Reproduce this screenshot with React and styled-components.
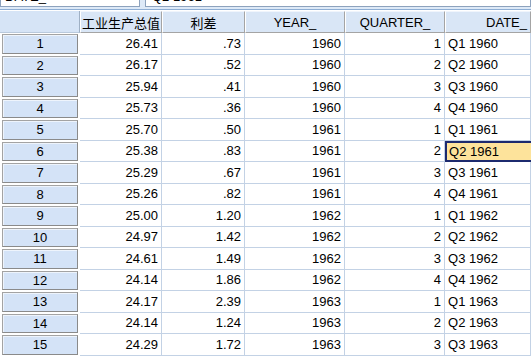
import React from "react";
import styled, { createGlobalStyle } from "styled-components";

const GlobalStyle = createGlobalStyle`
	html, body {
		margin: 0;
		padding: 0;
		background: #ffffff;
		overflow: hidden;
	}
	body {
		font-family: "Liberation Sans", Arial, "Noto Sans CJK SC", sans-serif;
		color: #000;
	}
`

const COLS = "80px 82px 83px 100px 100px 86px"

const Page = styled.div`
	width: 531px;
	height: 356px;
	overflow: hidden;
	background: #fff;
`

// 上方变量名框 / 值框 (只露出底部)
const CellBar = styled.div`
	display: flex;
	gap: 5px;
	height: 6px;
	background: #dde9f7;
	padding-bottom: 3px;
	border-bottom: 1px solid #8eaed4;
	margin-bottom: 1px;
`
const BarBox = styled.div`
	width: ${(p) => p.$width};
	flex: ${(p) => (p.$grow ? 1 : "none")};
	height: 6px;
	background: #fff;
	border: 1px solid #8da2bd;
	border-top: none;
	overflow: hidden;
`
const BarText = styled.span`
	display: block;
	font-size: 13px;
	line-height: 13px;
	margin-top: -10px;
	padding-left: ${(p) => p.$pad || "4px"};
`

const Row = styled.div`
	display: grid;
	grid-template-columns: ${COLS};
	height: ${(p) => p.$h || "21.5px"};
`

const Corner = styled.div`
	background: #d6e4f6;
	border-right: 1px solid #9fb0c4;
	border-bottom: 1px solid #b9c9dc;
`
const HeadCell = styled.div`
	background: #d9e6f6;
	border: 1px solid #a4a4a4;
	border-left-color: #ffffff;
	border-top-color: #f0f5fc;
	font-size: 13px;
	display: flex;
	align-items: center;
	justify-content: ${(p) => (p.$right ? "flex-end" : "center")};
	padding-right: ${(p) => (p.$right ? "3px" : "0")};
	font-family: "Liberation Sans", "Noto Sans CJK SC", sans-serif;
	white-space: nowrap;
	overflow: hidden;
`
const RowHead = styled.div`
	margin: 1px 2px 1px 2px;
	background: #d4e3f7;
	border: 1px solid #a3a3a3;
	border-right-color: #8a8a8a;
	border-bottom-color: #8a8a8a;
	box-shadow: inset 1px 1px 0 #eef4fc;
	font-size: 13px;
	display: flex;
	align-items: center;
	justify-content: center;
`
const Cell = styled.div`
	border-right: 1px solid #c3d2e5;
	border-bottom: 1px solid #c3d2e5;
	font-size: 13px;
	display: flex;
	align-items: center;
	justify-content: ${(p) => (p.$left ? "flex-start" : "flex-end")};
	padding: ${(p) => (p.$left ? "0 0 0 3px" : "0 3px 0 0")};
	white-space: nowrap;
	overflow: hidden;
	${(p) =>
		p.$active &&
		`
		background: #fde39b;
		border: 2px solid #1c2a6e;
		border-right: none;
		padding-left: 2px;
	`}
`

const data = [
	["26.41", ".73", 1960, 1],
	["26.17", ".52", 1960, 2],
	["25.94", ".41", 1960, 3],
	["25.73", ".36", 1960, 4],
	["25.70", ".50", 1961, 1],
	["25.38", ".83", 1961, 2],
	["25.29", ".67", 1961, 3],
	["25.26", ".82", 1961, 4],
	["25.00", "1.20", 1962, 1],
	["24.97", "1.42", 1962, 2],
	["24.61", "1.49", 1962, 3],
	["24.14", "1.86", 1962, 4],
	["24.17", "2.39", 1963, 1],
	["24.14", "1.24", 1963, 2],
	["24.29", "1.72", 1963, 3],
]

function App() {
	return (
		<Page>
			<GlobalStyle />
			<CellBar>
				<BarBox $width="138px">
					<BarText>DATE_</BarText>
				</BarBox>
				<BarBox $grow>
					<BarText $pad="6px">Q2 1961</BarText>
				</BarBox>
			</CellBar>
			<Row $h="22px">
				<Corner />
				<HeadCell>工业生产总值</HeadCell>
				<HeadCell>利差</HeadCell>
				<HeadCell>YEAR_</HeadCell>
				<HeadCell>QUARTER_</HeadCell>
				<HeadCell $right>DATE_</HeadCell>
			</Row>
			{data.map((d, i) => (
				<Row key={i}>
					<RowHead>{i + 1}</RowHead>
					<Cell>{d[0]}</Cell>
					<Cell>{d[1]}</Cell>
					<Cell>{d[2]}</Cell>
					<Cell>{d[3]}</Cell>
					<Cell $left $active={i === 5}>
						Q{d[3]} {d[2]}
					</Cell>
				</Row>
			))}
		</Page>
	)
}

export default App
